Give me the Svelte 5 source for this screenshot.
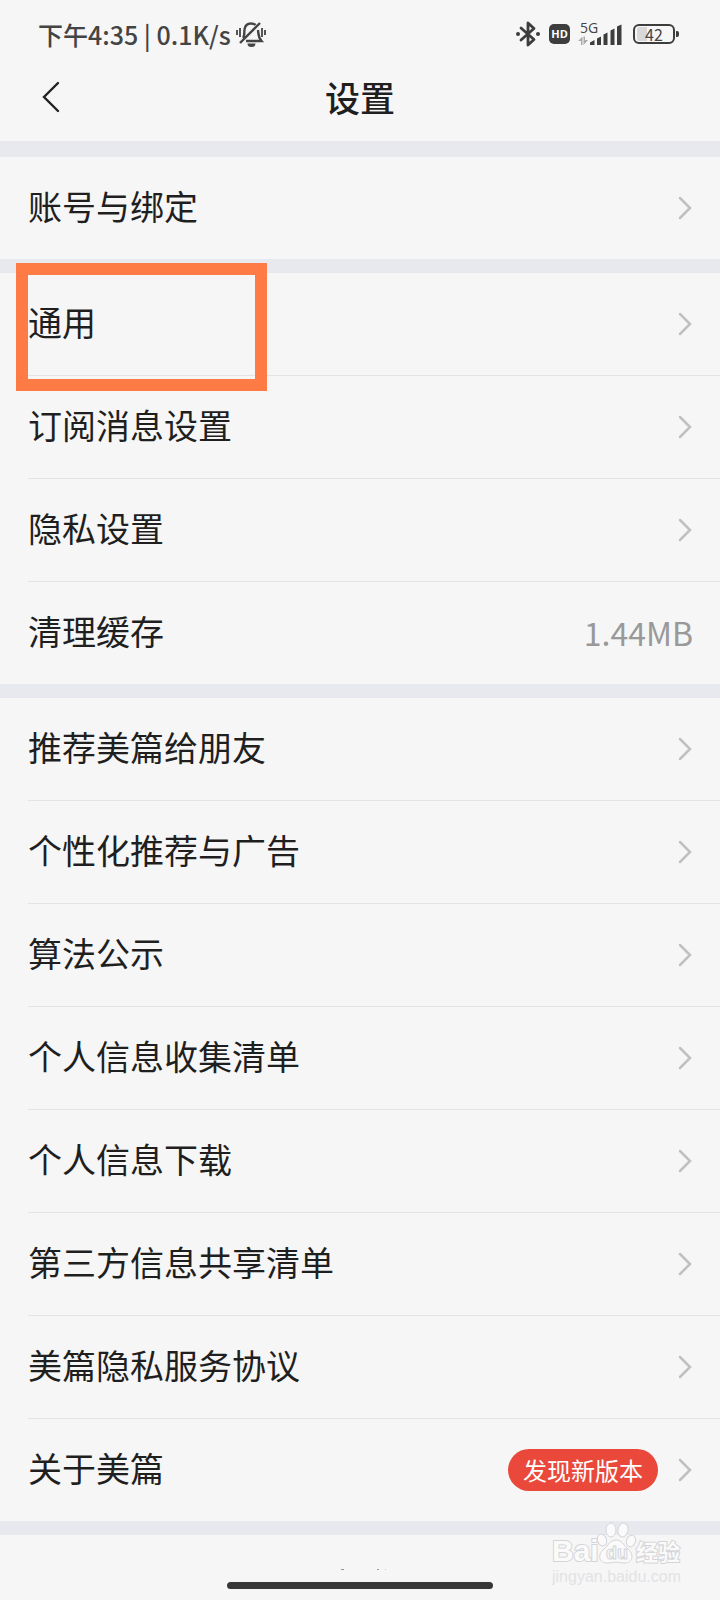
<script lang="ts">
  interface Item {
    title: string
    value?: string
    badge?: string
    marked?: boolean
  }

  const groups: Item[][] = [
    [{ title: '账号与绑定' }],
    [
      { title: '通用', marked: true },
      { title: '订阅消息设置' },
      { title: '隐私设置' },
      { title: '清理缓存', value: '1.44MB' },
    ],
    [
      { title: '推荐美篇给朋友' },
      { title: '个性化推荐与广告' },
      { title: '算法公示' },
      { title: '个人信息收集清单' },
      { title: '个人信息下载' },
      { title: '第三方信息共享清单' },
      { title: '美篇隐私服务协议' },
      { title: '关于美篇', badge: '发现新版本' },
    ],
  ]
</script>

<div class="screen">
  <div class="status">
    <span class="time">下午4:35 | 0.1K/s</span>
    <svg class="bell" width="32" height="28" viewBox="0 0 32 28" fill="none" stroke="#444" stroke-width="2.400">
      <path d="M8 18 C10 16 9 12 9.500 9.500 C10 6 12.500 3.500 16 3.500 C18 3.500 19.500 4 20.500 5" />
      <path d="M23 10 C23.500 14 23 17 26.500 21 H11" />
      <path d="M5 23 L25 3" />
      <path d="M12.500 23.500 H20.500 A4 3.500 0 0 1 12.500 23.500 Z" fill="#444" stroke="none" />
      <path d="M2 10 V15 M5 8 V17 M27 8 V17 M30 10 V15" stroke-width="1.800" />
    </svg>
    <div class="icons">
      <svg width="26" height="28" viewBox="0 0 26 28" fill="none" stroke="#3d3d3d" stroke-width="2.800">
        <path d="M6 8 L19 19.500 L13 25 V3 L19 8.500 L6 20" stroke-linejoin="round" stroke-linecap="round" />
        <circle cx="3" cy="14" r="2" fill="#3d3d3d" stroke="none" />
        <circle cx="23" cy="14" r="2" fill="#3d3d3d" stroke="none" />
      </svg>
      <span class="hd">HD</span>
      <svg width="45" height="32" viewBox="0 0 45 32">
        <text x="2" y="15" font-size="14" fill="#444">5G</text>
        <path d="M0 23 L4.500 18.500 V27 H3 V23 Z M10 22 L5.500 27 V18.500 H7 V22 Z" fill="#aaa" />
        <g fill="#3d3d3d">
          <path d="M12 27 V24.500 L16.500 22 V27 Z" />
          <path d="M19 27 V20.500 L23 18.500 V27 Z" />
          <path d="M25.500 27 V16.500 L29.500 14.500 V27 Z" />
          <path d="M32.500 27 V12.500 L36.500 10.500 V27 Z" />
          <path d="M39 27 V8.500 L43.500 6.500 V27 Z" />
        </g>
      </svg>
      <div class="battery"><span>42</span></div>
    </div>
  </div>

  <header>
    <button class="back" aria-label="返回">
      <svg width="20" height="32" viewBox="0 0 20 32" fill="none" stroke="#222" stroke-width="2.400" stroke-linecap="round">
        <path d="M17 2 L3 16 L17 30" />
      </svg>
    </button>
    <h1>设置</h1>
  </header>

  <main>
    {#each groups as group}
      <ul>
        {#each group as item}
          <li class:marked={item.marked}>
            <button class="row">
              <span class="title">{item.title}</span>
              {#if item.badge}
                <span class="badge">{item.badge}</span>
              {/if}
              {#if item.value}
                <span class="value">{item.value}</span>
              {:else}
                <svg width="16" height="26" viewBox="0 0 16 26" fill="none" stroke="#c0c0c0" stroke-width="2.500" stroke-linecap="round">
                  <path d="M3 3 L13 13 L3 23" />
                </svg>
              {/if}
            </button>
          </li>
        {/each}
      </ul>
    {/each}
  </main>

  <footer>
    <!-- tops of the next line, cut off by the screen edge -->
    <svg width="100" height="2" viewBox="0 0 100 2">
      <path d="M31 0.500 H34" stroke="#a88" />
      <path d="M67 0.500 H69" stroke="#999" />
      <path d="M75 0.500 H76" stroke="#ccc" />
    </svg>
    <div class="home"></div>
    <div class="watermark">
      <svg width="132" height="46" viewBox="0 0 132 46" fill="#fafafa" stroke="#d4d5d9" stroke-width="1">
        <g font-weight="700" paint-order="stroke" stroke-width="2">
          <text x="0" y="40" font-size="30">Bai</text>
          <text class="cjk" x="84" y="39" font-size="22">经验</text>
        </g>
        <ellipse cx="50" cy="19" rx="4.500" ry="6" transform="rotate(-20 50 19)" />
        <ellipse cx="59" cy="9" rx="5" ry="7" />
        <ellipse cx="71" cy="9" rx="5" ry="7" transform="rotate(10 71 9)" />
        <ellipse cx="79" cy="20" rx="4.500" ry="6" transform="rotate(20 79 20)" />
        <path d="M64 19 C70 19 71 24 76 28 C83 34 80 42 73 42 C69 42 67 41 64 41 C61 41 59 42 55 42 C47 42 45 34 52 28 C57 24 58 19 64 19 Z" />
        <text x="54" y="38" font-size="18" font-weight="700">du</text>
      </svg>
      <span>jingyan.baidu.com</span>
    </div>
  </footer>
</div>

<style>
  :global(body) {
    margin: 0;
    background: #f6f6f6;
  }

  .screen {
    color: #1f1f1f;
    background: #f6f6f6;
    font-family: 'Noto Sans CJK SC', sans-serif;
  }

  .status {
    display: flex;
    align-items: center;
    height: 56px;
    padding: 12px 41px 0 38px;
    box-sizing: border-box;
    color: #444;
  }

  .time {
    padding-bottom: 1px;
    font-size: 25px;
    font-weight: 500;
    line-height: 32px;
    white-space: nowrap;
  }

  .bell {
    margin-left: 4px;
  }

  .icons {
    display: flex;
    align-items: center;
    gap: 8px;
    margin-left: auto;
  }

  .icons text {
    font-family: 'Open Sans', sans-serif;
  }

  .hd {
    width: 21px;
    border-radius: 5px;
    color: #fff;
    background: #3d3d3d;
    font: 700 11px/20px 'Open Sans', sans-serif;
    text-align: center;
  }

  .battery {
    position: relative;
    width: 34px;
    margin: 0 4px 0 2px;
    padding: 1px 2px;
    border: 2px solid #3d3d3d;
    border-radius: 6px;
    background: linear-gradient(90deg, #d8d8d8 30%, transparent 30%) content-box;
    font: 400 16px/14px 'Noto Sans CJK SC', sans-serif;
    text-align: center;
  }

  .battery::after {
    content: '';
    position: absolute;
    top: 5px;
    right: -6px;
    width: 3px;
    height: 6px;
    border-radius: 0 2px 2px 0;
    background: #3d3d3d;
  }

  header {
    display: grid;
    grid-template-columns: 1fr auto 1fr;
    align-items: center;
    height: 85px;
    padding-bottom: 3px;
    box-sizing: border-box;
  }

  h1 {
    margin: 0;
    font-size: 35px;
    font-weight: 500;
    line-height: 48px;
  }

  button {
    padding: 0;
    border: 0;
    color: inherit;
    background: none;
    font-family: inherit;
    cursor: pointer;
  }

  .back {
    display: flex;
    justify-self: start;
    padding: 0 20px 0 41px;
  }

  main {
    border-top: 2px solid #e8e9ee;
  }

  ul {
    margin: 0;
    padding: 0;
    border-top: 14px solid #e8e9ee;
    list-style: none;
  }

  ul:last-child {
    border-bottom: 14px solid #e8e9ee;
  }

  li {
    position: relative;
    padding-left: 28px;
  }

  .row {
    display: flex;
    align-items: center;
    width: 100%;
    height: 102px;
    padding-right: 27px;
    text-align: left;
  }

  li + li .row {
    height: 103px;
    border-top: 1px solid #e2e3e4;
  }

  .title {
    flex: 1;
    padding-bottom: 4px;
    font-size: 34px;
    line-height: 48px;
  }

  .value {
    padding-bottom: 2px;
    color: #999;
    font-size: 32px;
    line-height: 48px;
  }

  .badge {
    margin-right: 19px;
    padding: 0 15px;
    border-radius: 21px;
    color: #fff;
    background: #e9483b;
    font-size: 24px;
    line-height: 42px;
  }

  /* frame over the entry the reader should tap */
  .marked::after {
    content: '';
    position: absolute;
    z-index: 1;
    top: -10px;
    left: 16px;
    width: 227px;
    height: 104px;
    border: 12px solid #ff7b45;
    pointer-events: none;
  }

  footer {
    position: relative;
    display: flex;
    flex-direction: column;
    align-items: center;
    justify-content: flex-end;
    gap: 11px;
    height: 65px;
    padding-bottom: 11px;
    box-sizing: border-box;
  }

  .home {
    width: 37%;
    height: 7px;
    border-radius: 4px;
    background: #383838;
  }

  .watermark {
    position: absolute;
    top: -14px;
    right: 36px;
    display: flex;
    flex-direction: column;
    color: #e2e3e5;
    font: 16px/20px 'Liberation Sans', sans-serif;
  }

  .watermark text {
    font-family: 'Liberation Sans', sans-serif;
  }

  .watermark .cjk {
    font-family: 'Noto Sans CJK SC', sans-serif;
  }
</style>
